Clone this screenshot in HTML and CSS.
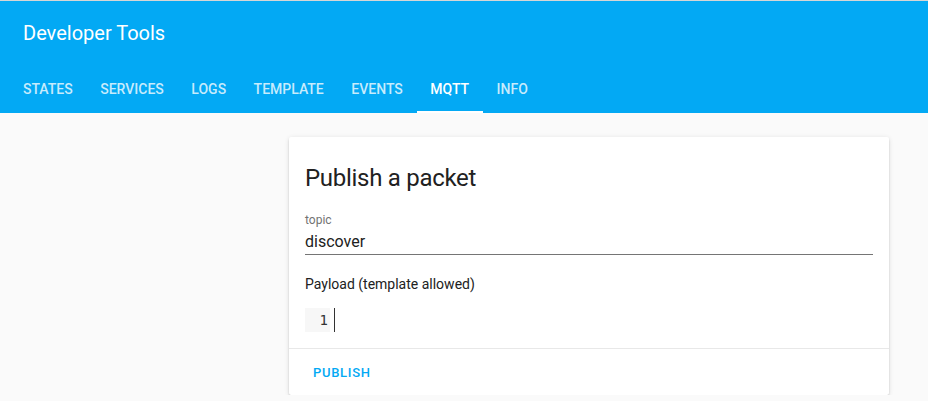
FILE: index.html
```html
<!DOCTYPE html>
<html>
<head>
<meta charset="utf-8">
<link rel="stylesheet" href="styles.css">
</head>
<body>
<header class="app-header">
  <div class="toolbar">
    <div class="title">Developer Tools</div>
  </div>
  <nav class="tabs">
    <div class="tab">States</div>
    <div class="tab">Services</div>
    <div class="tab">Logs</div>
    <div class="tab">Template</div>
    <div class="tab">Events</div>
    <div class="tab active">MQTT</div>
    <div class="tab">Info</div>
  </nav>
</header>
<main class="content">
  <section class="card">
    <div class="card-body">
      <h1 class="card-title">Publish a packet</h1>
      <div class="field">
        <label class="field-label">topic</label>
        <div class="field-input">discover</div>
      </div>
      <p class="payload-label">Payload (template allowed)</p>
      <div class="code">
        <div class="gutter">1</div>
        <div class="cursor"></div>
      </div>
    </div>
    <div class="card-actions">
      <button class="btn">Publish</button>
    </div>
  </section>
</main>
</body>
</html>
```
FILE: styles.css
```css
html, body {
  margin: 0;
  padding: 0;
}
body {
  background: #fafafa;
  font-family: Roboto, "Noto Sans", sans-serif;
  color: #212121;
  border-top: 1px solid #d6d6d6;
}
.app-header {
  background: #03a9f4;
  color: #fff;
}
.toolbar {
  height: 64px;
  display: flex;
  align-items: center;
  padding: 0 23px;
}
.title {
  font-size: 20px;
  font-weight: 400;
}
.tabs {
  display: flex;
  height: 48px;
  padding-left: 9.25px;
}
.tab {
  padding: 2px 13.75px 0;
  display: flex;
  align-items: center;
  font-size: 14px;
  font-weight: 500;
  text-transform: uppercase;
  color: rgba(255,255,255,0.78);
  box-sizing: border-box;
  border-bottom: 2px solid transparent;
}
.tab.active {
  color: #fff;
  border-bottom-color: #fff;
}
.content {
  padding: 24px 0 0 289px;
}
.card {
  width: 600px;
  background: #fff;
  border-radius: 2px;
  box-shadow: 0 2px 2px 0 rgba(0,0,0,0.14), 0 1px 5px 0 rgba(0,0,0,0.12), 0 3px 1px -2px rgba(0,0,0,0.2);
}
.card-body {
  padding: 25px 16px 16px;
}
.card-title {
  margin: 0;
  font-size: 24px;
  font-weight: 400;
  line-height: 32px;
  letter-spacing: -0.012em;
  color: #212121;
}
.field {
  margin-top: 18px;
  border-bottom: 1px solid #757575;
}
.field-label {
  display: block;
  font-size: 12px;
  line-height: 16px;
  color: #737373;
}
.field-input {
  margin-top: 2px;
  font-size: 16px;
  line-height: 24px;
  color: #212121;
}
.payload-label {
  margin: 19px 0 0;
  font-size: 14px;
  line-height: 20px;
  color: #212121;
}
.code {
  display: flex;
  align-items: stretch;
  margin-top: 14px;
  height: 24px;
}
.gutter {
  width: 25px;
  background: #f7f7f7;
  font-family: "DejaVu Sans Mono", monospace;
  font-size: 14px;
  line-height: 24px;
  text-align: right;
  padding-right: 2px;
  color: #333;
  box-sizing: border-box;
}
.cursor {
  width: 1px;
  background: #333;
  margin-left: 4px;
}
.card-actions {
  border-top: 1px solid #e8e8e8;
  padding: 8px 16px;
}
.btn {
  background: none;
  border: none;
  margin: 0;
  font-family: Roboto, sans-serif;
  font-size: 13px;
  font-weight: 500;
  letter-spacing: 0.7px;
  text-transform: uppercase;
  color: #03a9f4;
  padding: 7px 8px 6px;
  line-height: 17px;
}
```
